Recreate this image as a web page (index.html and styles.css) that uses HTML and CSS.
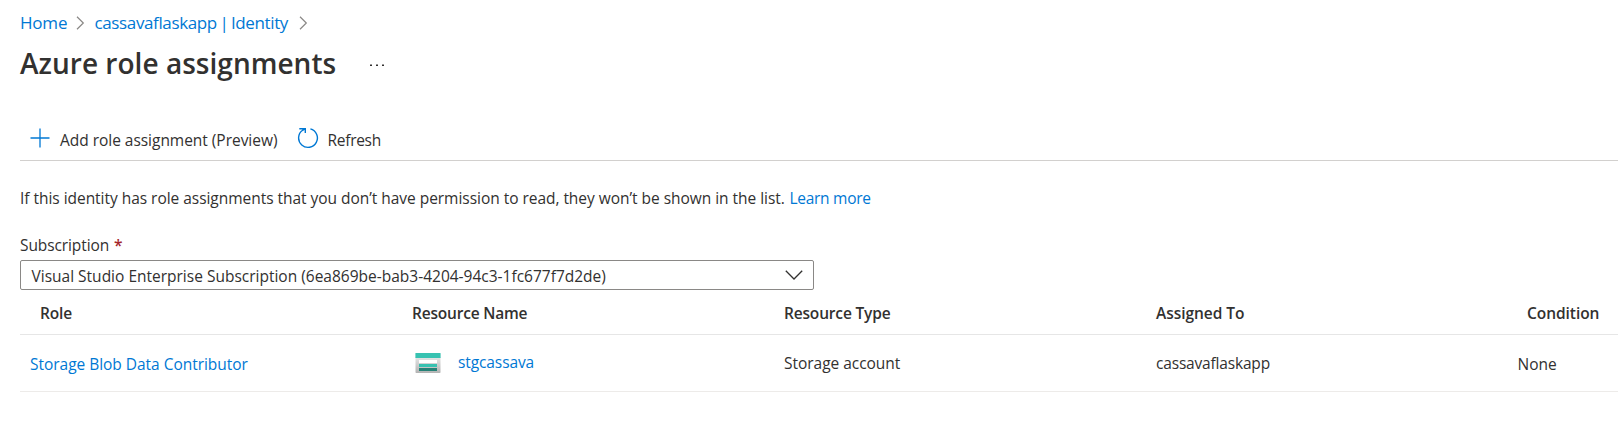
FILE: index.html
```
<!DOCTYPE html>
<html lang="en">
<head>
<meta charset="utf-8">
<title>Azure role assignments</title>
<link rel="stylesheet" href="styles.css">
</head>
<body>
<main class="page">
  <nav class="breadcrumb">
    <a class="crumb-home" href="#">Home</a>
    <svg class="crumb-sep" width="9" height="14" viewBox="0 0 9 14"><path d="M1 .8 7.3 7 1 13.2"/></svg>
    <a class="crumb-app" href="#">cassavaflaskapp | Identity</a>
    <svg class="crumb-sep" width="9" height="14" viewBox="0 0 9 14"><path d="M1 .8 7.3 7 1 13.2"/></svg>
  </nav>
  <header class="title-row">
    <h1>Azure role assignments</h1>
    <svg class="more" width="14" height="3" viewBox="0 0 14 3"><path d="M0 .5h2v1.6H0zM6 .5h2v1.6H6zM12 .5h2v1.6h-2z"/></svg>
  </header>
  <div class="toolbar">
    <button class="command">
      <svg class="plus" width="20" height="20" viewBox="0 0 20 20"><path d="M10 .5v19M.5 10h19"/></svg>
      <span class="label-add">Add role assignment (Preview)</span>
    </button>
    <button class="command">
      <svg class="refresh" width="22" height="22" viewBox="0 0 22 22"><path d="M13.4 1.9A9.4 9.4 0 1 1 5.600 3.300L7.900 1.900M2.300 1.700h6v4.300"/></svg>
      <span class="label-refresh">Refresh</span>
    </button>
  </div>
  <p class="notice"><span class="notice-text">If this identity has role assignments that you don’t have permission to read, they won’t be shown in the list.</span><a class="learn" href="#">Learn more</a></p>
  <label class="field-label"><span class="field-name">Subscription</span><span class="required">*</span></label>
  <div class="dropdown">
    <span class="dropdown-value">Visual Studio Enterprise Subscription (6ea869be-bab3-4204-94c3-1fc677f7d2de)</span>
    <svg class="caret" width="18" height="10" viewBox="0 0 18 10"><path d="M.8.8 9 9 17.2.8"/></svg>
  </div>
  <div class="grid">
    <div class="row head">
      <span class="h-role">Role</span><span class="h-name">Resource Name</span><span class="h-type">Resource Type</span><span class="h-to">Assigned To</span><span class="h-cond">Condition</span>
    </div>
    <div class="row data">
      <a class="c-role" href="#">Storage Blob Data Contributor</a>
      <span class="c-name">
        <svg width="26" height="20" viewBox="0 0 26 20">
          <defs><linearGradient id="body" x1="0" y1="0" x2="0" y2="1"><stop offset="0" stop-color="#e6e6e6"/><stop offset="1" stop-color="#b3b3b3"/></linearGradient></defs>
          <path fill="url(#body)" d="M.5 4h25v15.200a.8.8 0 0 1-.8.8H1.300a.8.8 0 0 1-.8-.8z"/>
          <path fill="#37c2b1" d="M1 0h24a.6.6 0 0 1 .6.6V5H.4V.6A.6.6 0 0 1 1 0z"/>
          <path fill="#fff" d="M4 7h18v3H4z"/>
          <path fill="#37c2b1" d="M4 11h18v3H4z"/>
          <path fill="#258277" d="M4 15h18v3H4z"/>
        </svg>
        <a class="stg" href="#">stgcassava</a>
      </span>
      <span class="c-type">Storage account</span>
      <span class="c-to">cassavaflaskapp</span>
      <span class="c-cond">None</span>
    </div>
  </div>
</main>
</body>
</html>
```
FILE: styles.css
```
* { box-sizing: border-box; }
body { margin: 0; background: #fff; color: #323130; font: 15.5px/20px "Open Sans", "Noto Sans", sans-serif; overflow: hidden; }
a { color: #0078d4; text-decoration: none; }
span, a, h1 { white-space: nowrap; }
svg { flex: none; display: block; }
.page { width: 1618px; height: 430px; padding-left: 20px; display: flex; flex-direction: column; }
.breadcrumb { height: 46px; display: flex; align-items: center; font-size: 17px; letter-spacing: -.2px; }
.crumb-home { width: 56px; padding-bottom: 1px; }
.crumb-app { width: 204px; margin-left: 9.500px; padding-bottom: 1px; letter-spacing: -.37px; word-spacing: -1.500px; }
.crumb-sep { fill: none; stroke: #8a8886; stroke-width: 1.200; }
.title-row { height: 38px; display: flex; align-items: center; }
h1 { margin: 0; width: 350px; padding-bottom: 4px; font-size: 28px; line-height: 34px; font-weight: 600; letter-spacing: .03px; }
.more { fill: #323130; }
.toolbar { margin-top: 32px; height: 45px; padding-left: 10px; border-bottom: 1px solid #d2d0ce; display: flex; align-items: center; }
.command { display: flex; align-items: center; padding: 0; border: 0; background: none; color: inherit; font: inherit; }
.command span { padding-top: 3px; letter-spacing: -.03px; }
.plus { fill: none; stroke: #0078d4; stroke-width: 1.300; }
.refresh { fill: none; stroke: #0078d4; stroke-width: 1.400; }
.label-add { width: 237px; margin-left: 10px; text-align: left; }
.command .label-refresh { margin-left: 8.500px; letter-spacing: -.28px; }
.notice { margin: 27px 0 0; height: 20px; display: flex; }
.notice-text { width: 769.5px; letter-spacing: -.035px; }
.learn { letter-spacing: -.28px; }
.field-label { display: flex; margin-top: 27px; height: 20px; }
.field-name { width: 94px; letter-spacing: -.1px; }
.required { color: #a4262c; font-weight: 600; }
.dropdown { width: 794px; height: 30px; margin-top: 5px; padding: 0 10px 0 10.500px; border: 1px solid #8a8886; border-radius: 2px; display: flex; align-items: center; justify-content: space-between; }
.dropdown-value { padding-top: 1px; }
.caret { fill: none; stroke: #323130; stroke-width: 1.300; }
.row { display: grid; grid-template-columns: 392px 372px 372px 361px 101px; align-items: center; }
.head { height: 45px; border-bottom: 1px solid #e6e6e6; font-weight: 600; letter-spacing: -.17px; }
.head span { padding-top: 1px; }
.data { height: 57px; border-bottom: 1px solid #edebe9; letter-spacing: -.03px; }
.h-role { padding-left: 20px; }
.h-name { letter-spacing: -.2px; }
.h-to { letter-spacing: -.05px; }
.h-cond { padding-left: 10px; letter-spacing: -.05px; }
.c-role { padding: 2px 0 0 10px; }
.c-name { display: flex; align-items: center; padding-left: 3px; }
.stg { margin-left: 17px; padding-bottom: 2px; letter-spacing: -.1px; }
.c-to { letter-spacing: -.18px; }
.c-cond { padding: 2px 0 0 .5px; }
```
